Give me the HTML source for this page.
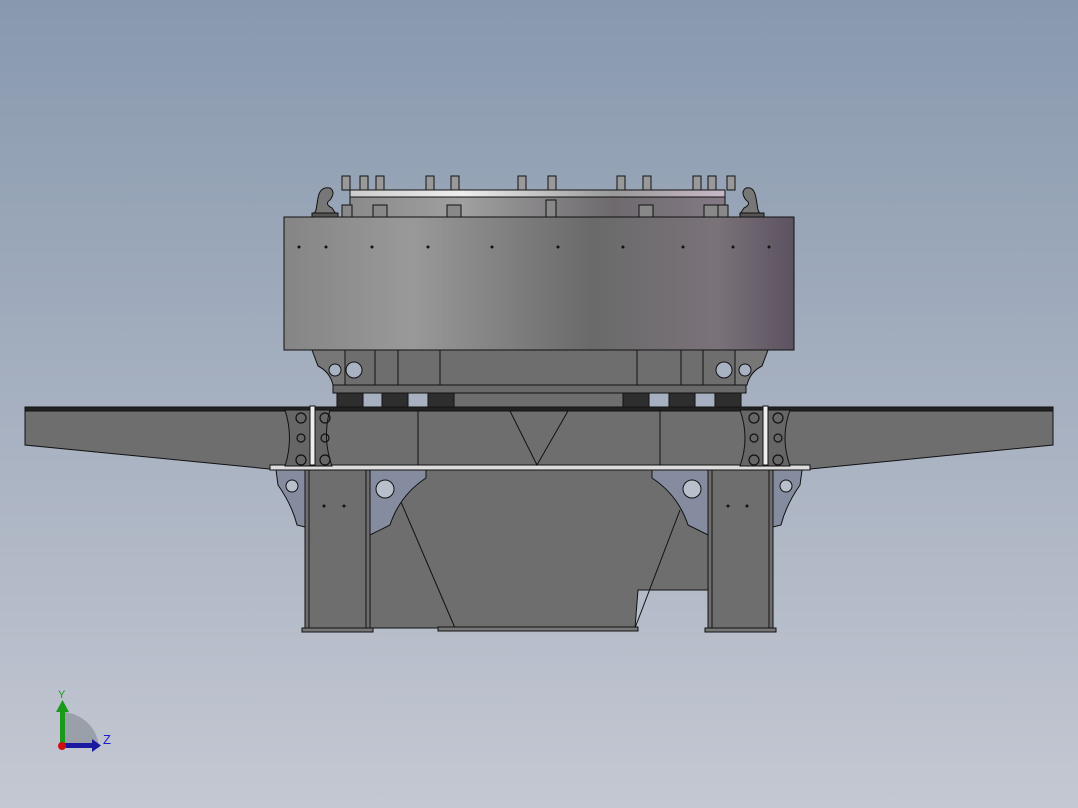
<!DOCTYPE html>
<html><head><meta charset="utf-8"><style>
html,body{margin:0;padding:0;width:1078px;height:808px;overflow:hidden}
body{background:linear-gradient(#8899ae 0%,#a6b0c0 50%,#c4c8d2 100%)}
svg{position:absolute;left:0;top:0}
</style></head><body>
<svg width="1078" height="808" viewBox="0 0 1078 808" font-family="Liberation Sans, sans-serif">
<defs>
<linearGradient id="drum" x1="0" x2="1">
<stop offset="0" stop-color="#858585"/><stop offset="0.25" stop-color="#999"/>
<stop offset="0.6" stop-color="#6a6a6a"/><stop offset="0.85" stop-color="#7a7279"/>
<stop offset="1" stop-color="#5c5260"/></linearGradient>
<linearGradient id="lid" x1="0" x2="1">
<stop offset="0" stop-color="#8a8a8a"/><stop offset="0.3" stop-color="#a0a0a0"/>
<stop offset="0.7" stop-color="#6e6a6e"/><stop offset="1" stop-color="#847a86"/></linearGradient>
<linearGradient id="rim" x1="0" x2="1">
<stop offset="0" stop-color="#ccc"/><stop offset="0.3" stop-color="#eee"/>
<stop offset="0.7" stop-color="#999"/><stop offset="1" stop-color="#c8b8c8"/></linearGradient>
</defs>
<g stroke="#111" stroke-width="1">
<rect x="350" y="190" width="375" height="27" fill="url(#lid)"/>
<rect x="350" y="190" width="375" height="7" fill="url(#rim)"/>
<g fill="#999">
<rect x="342" y="176" width="8" height="14"/><rect x="360" y="176" width="8" height="14"/><rect x="376" y="176" width="8" height="14"/>
<rect x="426" y="176" width="8" height="14"/><rect x="451" y="176" width="8" height="14"/><rect x="518" y="176" width="8" height="14"/>
<rect x="548" y="176" width="8" height="14"/><rect x="617" y="176" width="8" height="14"/><rect x="643" y="176" width="8" height="14"/>
<rect x="693" y="176" width="8" height="14"/><rect x="708" y="176" width="8" height="14"/><rect x="727" y="176" width="8" height="14"/>
</g>
<path d="M316 210 L318 198 Q320 186 330 188 Q336 192 330 200 Q324 204 332 208 L336 214 L314 214Z" fill="#777"/>
<path d="M758 210 L756 198 Q754 186 746 188 Q740 192 746 200 Q752 204 744 208 L740 214 L760 214Z" fill="#777"/>
<rect x="312" y="213" width="26" height="4" fill="#555"/><rect x="740" y="213" width="24" height="4" fill="#555"/>
<g fill="#888"><rect x="342" y="205" width="10" height="12"/><rect x="373" y="205" width="14" height="12"/><rect x="447" y="205" width="14" height="12"/><rect x="546" y="200" width="10" height="17"/><rect x="639" y="205" width="14" height="12"/><rect x="704" y="205" width="14" height="12"/><rect x="718" y="205" width="10" height="12"/></g>
<rect x="284" y="217" width="510" height="133" fill="url(#drum)"/>
<rect x="334" y="350" width="412" height="36" fill="#6e6e6e"/>
<line x1="375" y1="350" x2="375" y2="385"/><line x1="398" y1="350" x2="398" y2="385"/><line x1="440" y1="350" x2="440" y2="385"/><line x1="637" y1="350" x2="637" y2="385"/><line x1="681" y1="350" x2="681" y2="385"/><line x1="703" y1="350" x2="703" y2="385"/>
<path d="M312 350 L345 350 L345 385 L333 385 Q330 372 318 366Z" fill="#777"/>
<path d="M768 350 L735 350 L735 385 L747 385 Q750 372 762 366Z" fill="#777"/>
<circle cx="335" cy="370" r="6" fill="#a8b2c2"/><circle cx="354" cy="370" r="8" fill="#a8b2c2"/>
<circle cx="745" cy="370" r="6" fill="#a8b2c2"/><circle cx="724" cy="370" r="8" fill="#a8b2c2"/>
<rect x="333" y="385" width="413" height="8" fill="#6a6a6a"/>
<g fill="#2e2e2e"><rect x="337" y="393" width="26" height="14"/><rect x="382" y="393" width="26" height="14"/><rect x="428" y="393" width="26" height="14"/><rect x="623" y="393" width="26" height="14"/><rect x="669" y="393" width="26" height="14"/><rect x="715" y="393" width="26" height="14"/></g>
<rect x="454" y="393" width="169" height="14" fill="#6e6e6e"/>
<path d="M25 407 L1053 407 L1053 445 L800 470 L280 470 L25 445Z" fill="#6e6e6e"/>
<rect x="25" y="407" width="1028" height="4" fill="#222"/>
<rect x="270" y="465" width="540" height="5" fill="#ddd"/>
<line x1="418" y1="411" x2="418" y2="465"/><line x1="660" y1="411" x2="660" y2="465"/>
<path d="M510 411 L537 465 L568 411" fill="none"/>
<path d="M285 410 L330 410 Q322 438 332 466 L285 466 Q294 438 285 410Z" fill="#666"/>
<path d="M740 410 L790 410 Q780 438 790 466 L740 466 Q750 438 740 410Z" fill="#666"/>
<g fill="none" stroke-width="1.2"><circle cx="301" cy="418" r="5"/><circle cx="301" cy="438" r="4"/><circle cx="301" cy="460" r="5"/><circle cx="325" cy="418" r="5"/><circle cx="325" cy="438" r="4"/><circle cx="325" cy="460" r="5"/>
<circle cx="754" cy="418" r="5"/><circle cx="754" cy="438" r="4"/><circle cx="754" cy="460" r="5"/><circle cx="778" cy="418" r="5"/><circle cx="778" cy="438" r="4"/><circle cx="778" cy="460" r="5"/></g>
<rect x="310" y="406" width="5" height="59" fill="#eee"/><rect x="763" y="406" width="5" height="59" fill="#eee"/>
<path d="M370 470 L708 470 L708 590 L638 590 L635 628 L370 628Z" fill="#6e6e6e"/>
<path d="M398 495 L455 628" fill="none"/><path d="M680 510 L635 628" fill="none"/>
<rect x="438" y="627" width="200" height="4" fill="#777"/>
<rect x="305" y="470" width="65" height="158" fill="#6e6e6e"/>
<rect x="708" y="470" width="65" height="158" fill="#6e6e6e"/>
<line x1="309" y1="470" x2="309" y2="628"/><line x1="366" y1="470" x2="366" y2="628"/>
<line x1="712" y1="470" x2="712" y2="628"/><line x1="769" y1="470" x2="769" y2="628"/>
<rect x="302" y="628" width="71" height="4" fill="#777"/><rect x="705" y="628" width="71" height="4" fill="#777"/>
<path d="M276 470 L305 470 L305 527 L297 525 Q292 505 278 485Z" fill="#868ca0"/>
<path d="M370 470 L426 470 L426 478 Q400 495 390 525 L370 535Z" fill="#868ca0"/>
<path d="M802 470 L773 470 L773 527 L781 525 Q786 505 800 485Z" fill="#868ca0"/>
<path d="M708 470 L652 470 L652 478 Q678 495 688 525 L708 535Z" fill="#868ca0"/>
<circle cx="292" cy="486" r="6" fill="#b8c0cc"/><circle cx="385" cy="489" r="9" fill="#b8c0cc"/>
<circle cx="786" cy="486" r="6" fill="#b8c0cc"/><circle cx="692" cy="489" r="9" fill="#b8c0cc"/>
</g>
<g fill="#111"><circle cx="324" cy="506" r="1.5"/><circle cx="344" cy="506" r="1.5"/><circle cx="728" cy="506" r="1.5"/><circle cx="747" cy="506" r="1.5"/>
<circle cx="299" cy="247" r="1.5"/><circle cx="326" cy="247" r="1.5"/><circle cx="372" cy="247" r="1.5"/><circle cx="428" cy="247" r="1.5"/><circle cx="492" cy="247" r="1.5"/><circle cx="558" cy="247" r="1.5"/><circle cx="623" cy="247" r="1.5"/><circle cx="683" cy="247" r="1.5"/><circle cx="733" cy="247" r="1.5"/><circle cx="769" cy="247" r="1.5"/></g>
<path d="M62 748 L62 712 A38 38 0 0 1 99 748Z" fill="#9aa0aa"/>
<rect x="60" y="708" width="5" height="40" fill="#1a9a1a"/><path d="M56 712 L62.5 700 L69 712Z" fill="#1a9a1a"/>
<rect x="62" y="743" width="32" height="5" fill="#1a1aa0"/><path d="M92 739 L101 745.5 L92 752Z" fill="#1a1aa0"/>
<circle cx="62" cy="746" r="4" fill="#d01010"/>
<text x="58" y="698" font-size="11" fill="#1a9a1a">Y</text>
<text x="103" y="744" font-size="13" fill="#1a1ad0">Z</text>
</svg>
</body></html>
